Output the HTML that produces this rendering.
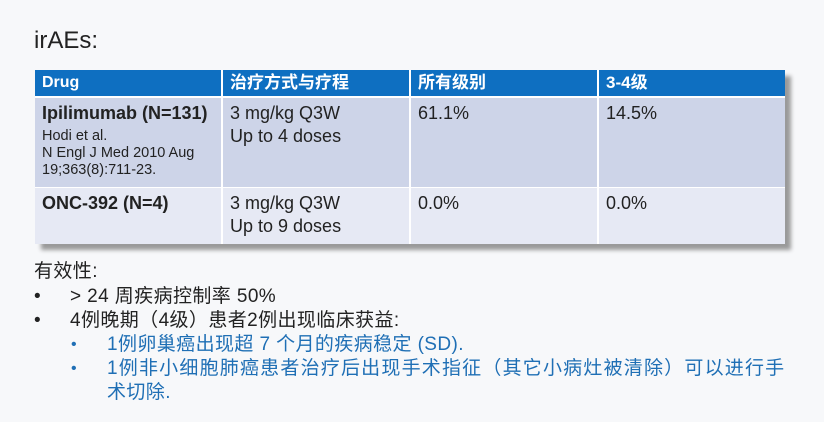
<!DOCTYPE html>
<html><head><meta charset="utf-8"><style>
body{margin:0;width:824px;height:422px;background:#f7f8fa;font-family:"Liberation Sans","Noto Sans CJK SC",sans-serif;position:relative;overflow:hidden;color:#222}
.a{position:absolute;white-space:nowrap;line-height:24px}
.tbl{position:absolute;left:35px;top:70px;width:750px;height:174px;box-shadow:6px 6px 4px #9a9a9a;background:#fff}
.c{position:absolute;box-sizing:border-box;padding:4px 0 0 7px}
.h{background:#0e6fc1;color:#fff;font-weight:bold;font-size:17px;top:0;height:26px;padding-top:2px;line-height:22px}
.r1{background:#cdd4e8;top:28px;height:89px;font-size:18px;line-height:23px}
.r2{background:#e6e9f4;top:118px;height:56px;font-size:18px;line-height:23px}
.b{font-weight:bold}
.sm{font-size:14.5px;line-height:17px;margin-top:3px}
.blue{color:#1f6fb5}
.t{font-size:19px;letter-spacing:0.4px}
</style></head><body>
<div class="a" style="left:34px;top:26px;font-size:24px;line-height:30px;color:#222">irAEs:</div>
<div class="tbl">
<div class="c h" style="left:0;width:186px;font-size:16px">Drug</div>
<div class="c h" style="left:188px;width:186px">治疗方式与疗程</div>
<div class="c h" style="left:376px;width:186px">所有级别</div>
<div class="c h" style="left:564px;width:186px">3-4级</div>
<div class="c r1" style="left:0;width:186px"><span class="b">Ipilimumab (N=131)</span><div class="sm">Hodi et al.<br>N Engl J Med 2010 Aug<br>19;363(8):711-23.</div></div>
<div class="c r1" style="left:188px;width:186px">3 mg/kg Q3W<br>Up to 4 doses</div>
<div class="c r1" style="left:376px;width:186px">61.1%</div>
<div class="c r1" style="left:564px;width:186px">14.5%</div>
<div class="c r2" style="left:0;width:186px"><span class="b">ONC-392 (N=4)</span></div>
<div class="c r2" style="left:188px;width:186px">3 mg/kg Q3W<br>Up to 9 doses</div>
<div class="c r2" style="left:376px;width:186px">0.0%</div>
<div class="c r2" style="left:564px;width:186px">0.0%</div>
</div>
<div class="a t" style="left:34px;top:260px">有效性:</div>
<div class="a t" style="left:34px;top:285px">•</div>
<div class="a t" style="left:70px;top:285px">&gt; 24 周疾病控制率 50%</div>
<div class="a t" style="left:34px;top:309px">•</div>
<div class="a t" style="left:70px;top:309px">4例晚期（4级）患者2例出现临床获益:</div>
<div class="a blue" style="left:71px;top:333px;font-size:16px">•</div>
<div class="a blue t" style="left:107px;top:333px">1例卵巢癌出现超 7 个月的疾病稳定 (SD).</div>
<div class="a blue" style="left:71px;top:357px;font-size:16px">•</div>
<div class="a blue t" style="left:107px;top:357px;letter-spacing:1.2px">1例非小细胞肺癌患者治疗后出现手术指征（其它小病灶被清除）可以进行手</div>
<div class="a blue t" style="left:107px;top:381px">术切除.</div>
</body></html>
